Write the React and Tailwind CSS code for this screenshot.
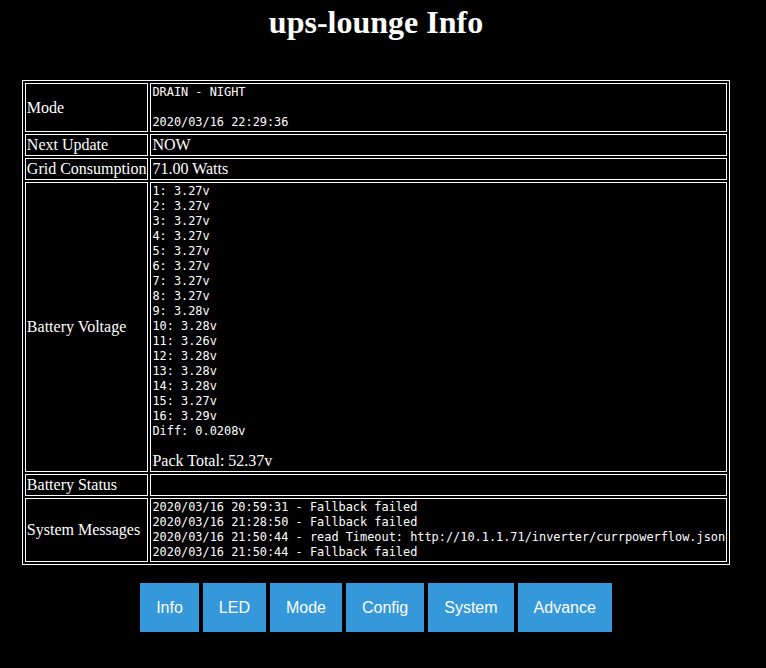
import React from "react";

const voltages = [
  "3.27", "3.27", "3.27", "3.27", "3.27", "3.27", "3.27", "3.27",
  "3.28", "3.28", "3.26", "3.28", "3.28", "3.28", "3.27", "3.29",
];

const messages = [
  "2020/03/16 20:59:31 - Fallback failed",
  "2020/03/16 21:28:50 - Fallback failed",
  "2020/03/16 21:50:44 - read Timeout: http://10.1.1.71/inverter/currpowerflow.json",
  "2020/03/16 21:50:44 - Fallback failed",
];

const tabs = ["Info", "LED", "Mode", "Config", "System", "Advance"];

const mono = "font-['DejaVu_Sans_Mono',monospace] text-[11.9px] leading-[15px] whitespace-pre";

const Label = ({ children }) => (
  <td className="border border-white p-[1px] align-middle whitespace-nowrap">{children}</td>
);

const Cell = ({ children }) => (
  <td className="border border-white p-[1px] align-top">{children}</td>
);

export default function App() {
  return (
    <div className="min-h-screen bg-black text-white font-['Liberation_Serif',serif]">
      <div className="w-[752px] pt-[4px]">
        <h1 className="text-center text-[32px] leading-[37px] font-bold">ups-lounge Info</h1>

        <table className="mx-auto mt-[39px] border border-white border-separate border-spacing-[2px] text-[16px] leading-[18px]">
          <tbody>
            <tr>
              <Label>Mode</Label>
              <Cell>
                <div className={mono}>{"DRAIN - NIGHT\n\n2020/03/16 22:29:36"}</div>
              </Cell>
            </tr>
            <tr>
              <Label>Next Update</Label>
              <Cell>NOW</Cell>
            </tr>
            <tr>
              <Label>Grid Consumption</Label>
              <Cell>71.00 Watts</Cell>
            </tr>
            <tr>
              <Label>Battery Voltage</Label>
              <Cell>
                <div className={mono}>
                  {voltages.map((v, i) => `${i + 1}: ${v}v`).join("\n") + "\nDiff: 0.0208v"}
                </div>
                <div className="mt-[13px]">Pack Total: 52.37v</div>
              </Cell>
            </tr>
            <tr>
              <Label>Battery Status</Label>
              <Cell>
                <div className="h-[18px]"></div>
              </Cell>
            </tr>
            <tr>
              <Label>System Messages</Label>
              <Cell>
                <div className={mono}>{messages.join("\n")}</div>
              </Cell>
            </tr>
          </tbody>
        </table>

        <div className="mt-[18px] flex justify-center gap-[4px] font-['Liberation_Sans',Arial,sans-serif]">
          {tabs.map((t) => (
            <button
              key={t}
              className="bg-[#3498db] text-white text-[16px] leading-[19px] px-[16px] py-[15px]"
            >
              {t}
            </button>
          ))}
        </div>
      </div>
    </div>
  );
}
